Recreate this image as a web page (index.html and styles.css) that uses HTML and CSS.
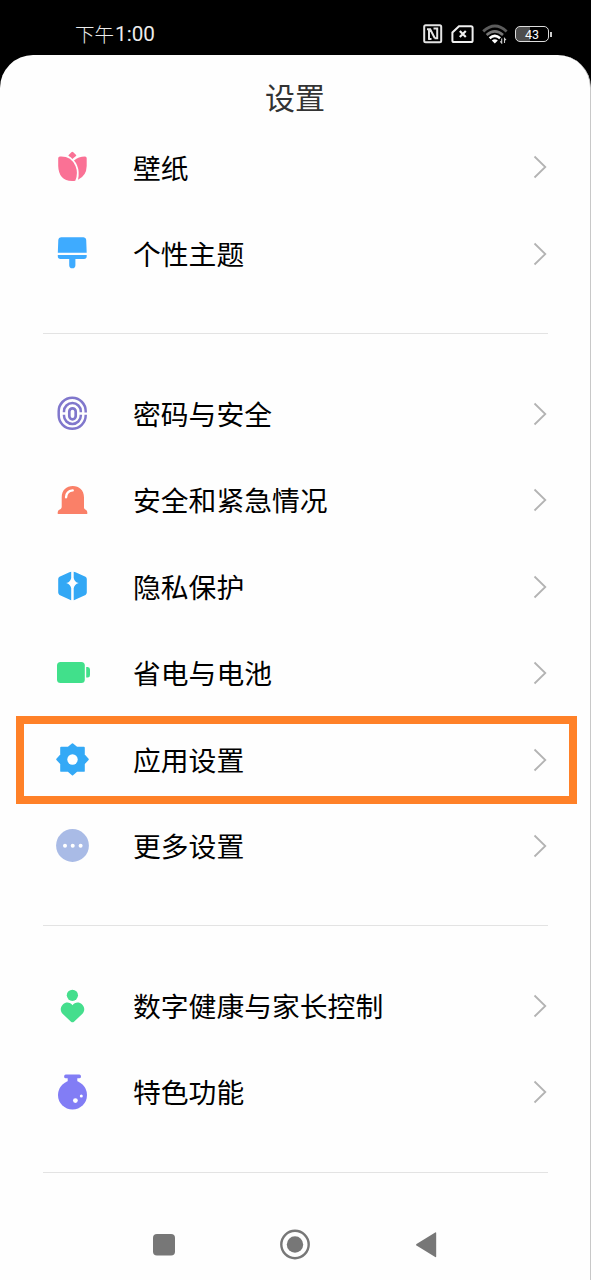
FILE: index.html
```html
<!DOCTYPE html>
<html lang="zh-CN">
<head>
<meta charset="utf-8">
<title>设置</title>
<link rel="stylesheet" href="styles.css">
</head>
<body>
<div class="phone">
  <header class="status">
    <span class="clock">下午<span class="digits">1:00</span></span>
    <div class="status-icons">
      <svg class="nfc" viewBox="0 0 20 20" fill="none" stroke="#e4e4e4" stroke-width="2"><rect x="1.200" y="1.200" width="17" height="17" rx="1.500"/><path d="M4 5.200h3.200l4.500 8.800M6 5v10.800M8.500 15h-3M10.500 4.600h3.700v9.600H11.500"/></svg>
      <svg class="sim" viewBox="0 0 23 20" fill="none" stroke="#f0f0f0" stroke-width="2"><path d="M8 2.200h12q1.600 0 1.600 1.600v12.600q0 1.600-1.600 1.600H3q-1.600 0-1.600-1.600V8.500z"/><path d="m8.800 7 6 6m0-6-6 6" stroke-width="2.200"/></svg>
      <svg class="wifi" viewBox="0 0 26 20" fill="none"><path d="M1.200 7.400Q13-3.400 24.600 7.400" stroke="#5c5c5c" stroke-width="2.800"/><path d="M4.600 11q8.200-7.300 16.400 0" stroke="#777" stroke-width="2.600"/><path d="M7.600 14.200q5.200-4.500 10.500 0" stroke="#fff" stroke-width="2.600"/><path d="M9.800 16.400q3-2.400 6 0l-3 3.200z" fill="#fff"/><path d="M19.700 14.500V19l-1.500-1.600M22.500 19v-4.500l1.500 1.600" stroke="#ccc" stroke-width="1.100"/></svg>
      <div class="battery"><div class="battery-body">43</div><div class="battery-tip"></div></div>
    </div>
  </header>
  <main class="sheet">
    <h1 class="title">设置</h1>
    <ul class="group">
      <li class="row">
        <svg class="icon" viewBox="0 0 36 36" fill="#fa7195"><path d="M17.800 2.800q.5 0 1 .5l2.800 2.600q.5.6-.1 1.100-2 1.300-3.600 3-1.500-1.800-3.700-3-.6-.5 0-1.100l2.700-2.600q.4-.5.900-.5z"/><path d="M5.500 7.600q11-.6 15.500 9.400 3 7.500-.2 14.700-1.500.5-3.300.4Q4.200 31.700 3.700 17V9.300q0-1.500 1.800-1.700z"/><path d="M30.500 7.600q1.700.1 1.700 1.700V17q-.2 9.800-8.700 13.700 1.800-8-1-14.500-1.200-2.700-3-4.600 4.500-4 11-4z"/></svg>
        <span class="label">壁纸</span><svg class="chev" viewBox="0 0 14 24"><path d="M1.500 1.500 12.300 12 1.500 22.500"/></svg>
      </li>
      <li class="row">
        <svg class="icon" viewBox="0 0 36 36" fill="#3eabff"><path d="M6.500 1.300h22.500q2.500 0 2.700 2.500l.5 12.900H3.300L3.800 3.800q.2-2.500 2.700-2.500zM3.300 19h28.900v1.300q0 2.700-2.700 2.700h-8.600v6.200a3.100 3.100 0 0 1-6.200 0V23H6q-2.700 0-2.700-2.700z"/></svg>
        <span class="label">个性主题</span><svg class="chev" viewBox="0 0 14 24"><path d="M1.500 1.500 12.300 12 1.500 22.500"/></svg>
      </li>
    </ul>
    <hr class="divider">
    <ul class="group">
      <li class="row">
        <svg class="icon" viewBox="0 0 36 36" fill="none" stroke="#8077cc" stroke-width="2.500"><rect x="14.800" y="12.300" width="6.400" height="11" rx="3.200" stroke-width="2.700"/><path d="M9.500 16.300V15.300a8.400 8.200 0 0 1 16.800 0V16.300M26.300 18.700v1a8.400 8.200 0 0 1-16.800 0v-1"/><path d="M31.200 16.500V15.300A13.400 13.400 0 0 0 4.200 15.300v4a13.400 13.400 0 0 0 27 0v-.5"/></svg>
        <span class="label">密码与安全</span><svg class="chev" viewBox="0 0 14 24"><path d="M1.500 1.500 12.300 12 1.500 22.500"/></svg>
      </li>
      <li class="row">
        <svg class="icon" viewBox="0 0 36 36"><path d="M7.200 15.500C7.200 8 12 4 18.300 4s11.200 4 11.200 11.500v10.300q.2 1.500 1.700 2 1.600.7 1.600 2.400v1.300q0 .6-.6.600H3.800q-.6 0-.6-.6v-1.300q0-1.700 1.600-2.400 2.200-.8 2.400-2.500z" fill="#fa8068"/><path d="M11.600 15.200q.2-6 6.600-6.800" fill="none" stroke="#fff" stroke-width="2.400" stroke-linecap="round"/></svg>
        <span class="label">安全和紧急情况</span><svg class="chev" viewBox="0 0 14 24"><path d="M1.500 1.500 12.300 12 1.500 22.500"/></svg>
      </li>
      <li class="row">
        <svg class="icon" viewBox="0 0 36 36" fill="#33a8f5"><path d="M16.700 2.700v6.200q-.7 3.900-5 5.200 4.300 1.300 5 5.200v11.900q-.8 0-1.800-.6L5 25.900q-1.300-.8-1.300-2.300V10.100q0-1.500 1.300-2.300l9.900-4.500q1-.6 1.800-.6zM19.200 2.700v6.200q.7 3.900 5 5.200-4.300 1.300-5 5.200v11.900q.8 0 1.800-.6l10-4.700q1.300-.8 1.300-2.300V10.100q0-1.500-1.300-2.300l-10-4.500q-1-.6-1.800-.6z"/></svg>
        <span class="label">隐私保护</span><svg class="chev" viewBox="0 0 14 24"><path d="M1.500 1.500 12.300 12 1.500 22.500"/></svg>
      </li>
      <li class="row">
        <svg class="icon" viewBox="0 0 36 36" fill="#41e08b"><rect x="2.500" y="7" width="27.800" height="21" rx="3.500"/><path d="M31.700 12h1.500q2.300 0 2.300 2.500v5.400q0 2.500-2.300 2.500h-1.500z"/></svg>
        <span class="label">省电与电池</span><svg class="chev" viewBox="0 0 14 24"><path d="M1.500 1.500 12.300 12 1.500 22.500"/></svg>
      </li>
      <li class="row highlighted">
        <svg class="icon" viewBox="0 0 36 36"><path d="M18 2.200 22.300 5.700H29.400V12.900L33.400 17.300 29.400 21.700V28.900H22.300L18 32.600 13.700 28.900H6.600V21.700L2.600 17.300 6.600 12.900V5.700H13.700z" fill="#34a9f6" stroke="#34a9f6" stroke-width="1.800" stroke-linejoin="round"/><circle cx="18" cy="17.500" r="5.200" fill="#fff"/></svg>
        <span class="label">应用设置</span><svg class="chev" viewBox="0 0 14 24"><path d="M1.500 1.500 12.300 12 1.500 22.500"/></svg>
      </li>
      <li class="row">
        <svg class="icon" viewBox="0 0 36 36"><circle cx="18" cy="17.500" r="16.400" fill="#a9bbe6"/><g fill="#fff"><circle cx="10.500" cy="17.700" r="2"/><circle cx="18.200" cy="17.700" r="2"/><circle cx="26.100" cy="17.700" r="2"/></g></svg>
        <span class="label">更多设置</span><svg class="chev" viewBox="0 0 14 24"><path d="M1.500 1.500 12.300 12 1.500 22.500"/></svg>
      </li>
    </ul>
    <hr class="divider">
    <ul class="group">
      <li class="row">
        <svg class="icon" viewBox="0 0 36 36" fill="#45de8d"><circle cx="17.900" cy="7.300" r="5.600"/><path d="M18 17.300c2.300-3.500 7-3.300 9.400-1 3.200 3 3 7 .3 9.700l-8.200 7.700q-1.500 1.300-3 0L8.300 26c-2.700-2.700-2.900-6.700.3-9.700 2.400-2.300 7.100-2.500 9.400 1z"/></svg>
        <span class="label">数字健康与家长控制</span><svg class="chev" viewBox="0 0 14 24"><path d="M1.500 1.500 12.300 12 1.500 22.500"/></svg>
      </li>
      <li class="row">
        <svg class="icon" viewBox="0 0 36 36" fill="#827df5"><path d="M11.300.5h13.500q1.700 0 1.700 1.900t-1.700 1.900h-2v4h-9.600v-4h-1.900q-1.700 0-1.700-1.900T11.300.5z"/><circle cx="18" cy="20.900" r="14.500"/><g fill="#fff"><circle cx="20.900" cy="26.600" r="2.400"/><circle cx="26.800" cy="21.900" r="1.500"/></g></svg>
        <span class="label">特色功能</span><svg class="chev" viewBox="0 0 14 24"><path d="M1.500 1.500 12.300 12 1.500 22.500"/></svg>
      </li>
    </ul>
    <hr class="divider last">
    <nav class="navbar">
      <svg viewBox="0 0 32 32"><rect x="5" y="5" width="22" height="21.500" rx="4"/></svg>
      <svg viewBox="0 0 32 32"><circle cx="16" cy="15.500" r="13.700" fill="none" stroke="#777" stroke-width="2.400"/><circle cx="16" cy="15.500" r="8.200"/></svg>
      <svg viewBox="0 0 32 32"><path d="M26.200 4v23.500q0 1-1 .5L6.500 16.500q-1-.8 0-1.500L25.200 3.500q1-.5 1 .5z"/></svg>
    </nav>
  </main>
</div>
</body>
</html>
```
FILE: styles.css
```css
* { box-sizing: border-box; }
body {
  margin: 0;
  background: #000;
  font-family: "Noto Sans CJK SC", sans-serif;
}
.phone {
  display: flex;
  flex-direction: column;
  width: 591px;
  height: 1280px;
  overflow: hidden;
}
.status {
  display: flex;
  justify-content: space-between;
  align-items: center;
  flex: none;
  height: 55px;
  padding: 13px 39px 0 75px;
  color: #ececec;
}
.clock {
  display: flex;
  align-items: center;
  font-size: 19.5px;
  font-weight: 300;
  line-height: 28px;
}
.digits { font: 400 20.700px/28px Roboto, sans-serif; margin-left: 1px; }
.status-icons { display: flex; align-items: center; }
.nfc { width: 20px; height: 20px; margin-right: 8px; }
.sim { width: 23px; height: 20px; margin-right: 8px; }
.wifi { width: 26px; height: 20px; margin-right: 7px; }
.battery { display: flex; align-items: center; gap: 1px; }
.battery-body {
  width: 34px;
  height: 16px;
  border: 1.5px solid #ddd;
  border-radius: 5px;
  background: linear-gradient(90deg, #4d4d4d 43%, #000 43%);
  color: #fff;
  font: 400 12.500px/15px Roboto, sans-serif;
  text-align: center;
}
.battery-tip { width: 2px; height: 5px; background: #ccc; }
.sheet {
  display: flex;
  flex-direction: column;
  flex: 1;
  border-right: 1px solid #c8c8c8;
  border-radius: 33px 33px 0 0;
  background: #fefefe;
}
.title {
  flex: none;
  height: 69.3px;
  margin: 0;
  padding-top: 18px;
  color: #333;
  font-size: 30px;
  font-weight: 400;
  line-height: 47px;
  text-align: center;
}
.group { flex: none; margin: 0; padding: 0; list-style: none; }
.row {
  display: flex;
  align-items: center;
  height: 86.4px;
  padding: 0 43px 0 54px;
}
.icon { flex: none; width: 36px; height: 36px; transform: translateX(0.5px); }
.label {
  flex: 1;
  margin-left: 43px;
  padding-bottom: 1.5px;
  color: #000;
  font-size: 27.8px;
  font-weight: 400;
  line-height: 40px;
}
.chev {
  width: 14px;
  height: 24px;
  fill: none;
  stroke: #b3b3b3;
  stroke-width: 1.8;
}
.highlighted {
  height: 88px;
  margin: -0.2px 13px -1.4px 16px;
  padding: 0 22px 0 30px;
  border: 8px solid #ff8128;
}
.divider {
  flex: none;
  width: 505px;
  height: 1px;
  margin: 36px 0 36.5px 43px;
  border: 0;
  background: #e3e3e3;
}
.divider.last { margin: 36.6px 0 20px 43px; }
.navbar {
  display: flex;
  justify-content: space-between;
  margin: -1px 148px 0;
}
.navbar svg { width: 32px; height: 32px; fill: #777; }
.divider + .navbar { margin-top: 36px; margin-top: 35.5px; }
.divider.last + .navbar { margin-top: 36px; }
```
